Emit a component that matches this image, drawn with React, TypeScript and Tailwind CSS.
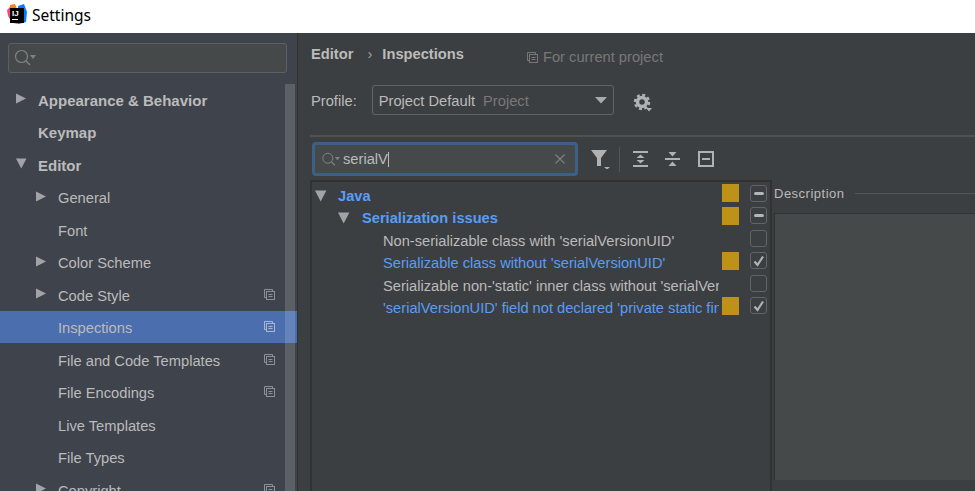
import React from 'react';

const FONT = "font-['Liberation_Sans',Arial,sans-serif]";

type NavItem = {
  label: string;
  indent?: boolean;
  bold?: boolean;
  arrow?: 'right' | 'down';
  copy?: boolean;
  selected?: boolean;
};

const navItems: NavItem[] = [
  { label: 'Appearance & Behavior', bold: true, arrow: 'right' },
  { label: 'Keymap', bold: true },
  { label: 'Editor', bold: true, arrow: 'down' },
  { label: 'General', indent: true, arrow: 'right' },
  { label: 'Font', indent: true },
  { label: 'Color Scheme', indent: true, arrow: 'right' },
  { label: 'Code Style', indent: true, arrow: 'right', copy: true },
  { label: 'Inspections', indent: true, copy: true, selected: true },
  { label: 'File and Code Templates', indent: true, copy: true },
  { label: 'File Encodings', indent: true, copy: true },
  { label: 'Live Templates', indent: true },
  { label: 'File Types', indent: true },
  { label: 'Copyright', indent: true, arrow: 'right', copy: true },
];

type CheckState = 'mixed' | 'on' | 'off';

const treeRows: { label: string; level: number; blue: boolean; mark: boolean; check: CheckState }[] = [
  { label: 'Java', level: 0, blue: true, mark: true, check: 'mixed' },
  { label: 'Serialization issues', level: 1, blue: true, mark: true, check: 'mixed' },
  { label: "Non-serializable class with 'serialVersionUID'", level: 2, blue: false, mark: false, check: 'off' },
  { label: "Serializable class without 'serialVersionUID'", level: 2, blue: true, mark: true, check: 'on' },
  { label: "Serializable non-'static' inner class without 'serialVersionUID'", level: 2, blue: false, mark: false, check: 'off' },
  { label: "'serialVersionUID' field not declared 'private static final long'", level: 2, blue: true, mark: true, check: 'on' },
];

function Logo() {
  return (
    <svg width="20" height="20" viewBox="0 0 20 20" className="mb-[5px] shrink-0">
      <polygon points="0,6 3,3 9,2 5,18 1,12" fill="#f9457f" />
      <polygon points="3,1 8,0 10,5 3,6" fill="#fc801d" />
      <polygon points="11,2 17,0 20,8 19,18 12,20" fill="#087cfa" />
      <polygon points="4,16 14,16 12,20 6,19" fill="#fe2857" />
      <rect x="3" y="4" width="14" height="15" fill="#000000" />
      <text x="5" y="11.5" fontSize="8" fontWeight="700" fill="#ffffff" fontFamily="Liberation Sans, sans-serif">
        IJ
      </text>
      <rect x="5" y="15" width="6" height="1" fill="#ffffff" />
    </svg>
  );
}

function SearchIcon({ size = 18, color = '#7f8386' }: { size?: number; color?: string }) {
  return (
    <svg width={size + 7} height={size} viewBox="0 0 25 18" className="shrink-0">
      <circle cx="7.5" cy="7.5" r="6" fill="none" stroke={color} strokeWidth="1.2" />
      <line x1="12" y1="12" x2="16" y2="16" stroke={color} strokeWidth="1.4" />
      <polygon points="16,6 22,6 19,10" fill={color} />
    </svg>
  );
}

function CopyIcon({ color = '#8b9196' }: { color?: string }) {
  return (
    <svg width="11" height="11" viewBox="0 0 11 11" className="shrink-0">
      <path d="M2.5 8.5 H0.5 V0.5 H8.5 V2.5" fill="none" stroke={color} />
      <rect x="2.5" y="2.5" width="8" height="8" fill="none" stroke={color} />
      <line x1="4.5" y1="5.5" x2="8.5" y2="5.5" stroke={color} />
      <line x1="4.5" y1="7.5" x2="8.5" y2="7.5" stroke={color} />
    </svg>
  );
}

function Arrow({ dir, size = 12 }: { dir: 'right' | 'down'; size?: number }) {
  return (
    <svg width={size} height={size} viewBox="0 0 12 12" className="shrink-0">
      {dir === 'right' ? <polygon points="0,0.5 10,5.5 0,10.5" fill="#a0a4a8" /> : <polygon points="0,0.5 10.5,0.5 5.25,10.5" fill="#a0a4a8" />}
    </svg>
  );
}

function SettingsNav() {
  return (
    <aside className="relative w-[297px] shrink-0 overflow-hidden bg-[#3f434c]">
      <div className="px-2 pt-[10px]">
        <div className="flex h-[30px] w-[279px] items-center rounded-[3px] border border-[#5d6062] bg-[#45494a] pl-[5px]">
          <SearchIcon />
        </div>
      </div>
      <ul className="mt-[10px]">
        {navItems.map((item) => (
          <li
            key={item.label}
            className={`flex h-[32.5px] items-center ${item.selected ? 'bg-[#4b6eaf]' : ''} ${item.indent ? 'pl-[36px]' : 'pl-[16px]'}`}
          >
            <span className="flex w-[22px] shrink-0 items-center">{item.arrow && <Arrow dir={item.arrow} />}</span>
            <span className={`mt-[3px] text-[#bbbbbb] ${item.bold ? 'text-[15px] font-bold' : 'text-[14.7px]'}`}>{item.label}</span>
            {item.copy && (
              <span className="ml-auto mr-[22px]">
                <CopyIcon color={item.selected ? '#a9b6cf' : '#8b9196'} />
              </span>
            )}
          </li>
        ))}
      </ul>
      <div className="absolute bottom-0 left-[285px] top-[51px] w-[10px] bg-white/15" />
    </aside>
  );
}

function Toolbar() {
  const c = '#afb1b3';
  return (
    <div className="ml-[13px] flex items-center">
      <svg width="20" height="20" viewBox="0 0 20 20" className="shrink-0">
        <polygon points="0,1 16,1 10,9 10,17 6,17 6,9" fill={c} />
        <polygon points="13,18 19,18 16,20.5" fill={c} />
      </svg>
      <span className="ml-[8px] h-[25px] w-px bg-[#51545a]" />
      <svg width="18" height="18" viewBox="0 0 18 18" className="ml-[12px] shrink-0">
        <rect x="1" y="1" width="15" height="2" fill={c} />
        <rect x="1" y="15" width="15" height="2" fill={c} />
        <polygon points="8.5,4.5 12.5,8 4.5,8" fill={c} />
        <polygon points="8.5,13.5 12.5,10 4.5,10" fill={c} />
      </svg>
      <svg width="18" height="18" viewBox="0 0 18 18" className="ml-[14px] shrink-0">
        <rect x="1" y="8" width="15" height="2" fill={c} />
        <polygon points="8.5,6.5 12.5,2 4.5,2" fill={c} />
        <polygon points="8.5,11.5 12.5,16 4.5,16" fill={c} />
      </svg>
      <svg width="16" height="16" viewBox="0 0 16 16" className="ml-[16px] shrink-0">
        <rect x="1" y="1" width="14" height="14" fill="none" stroke={c} strokeWidth="2" />
        <rect x="4" y="7" width="8" height="2" fill={c} />
      </svg>
    </div>
  );
}

function CheckBox({ state }: { state: CheckState }) {
  return (
    <span className="flex h-[17px] w-[17px] items-center justify-center rounded-[3px] border-[1.5px] border-[#626465]">
      {state === 'mixed' && <span className="h-[3px] w-[10px] rounded-sm bg-[#b4b6b7]" />}
      {state === 'on' && (
        <svg width="12" height="12" viewBox="0 0 12 12">
          <path d="M1.5 6.5 L4.5 10 L10 1.5" fill="none" stroke="#b0b2b3" strokeWidth="2.2" />
        </svg>
      )}
    </span>
  );
}

function InspectionTree() {
  return (
    <div className="w-[462px] shrink-0 border-x-2 border-t-2 border-[#323232]">
      {treeRows.map((row) => (
        <div key={row.label} className="flex h-[22.5px] items-center">
          <div
            className={`flex min-w-0 flex-1 items-center overflow-hidden ${row.level === 0 ? 'pl-[3px]' : row.level === 1 ? 'pl-[26px]' : 'pl-[71px]'}`}
          >
            {row.level < 2 && (
              <span className={`mt-[6px] shrink-0 ${row.level === 0 ? 'mr-[10px]' : 'mr-[11px]'}`}>
                <Arrow dir="down" size={13} />
              </span>
            )}
            <span
              className={`mt-[7px] whitespace-nowrap text-[14.65px] ${row.blue ? 'text-[#589df6]' : 'text-[#bbbbbb]'} ${row.level < 2 ? 'font-bold' : ''}`}
            >
              {row.label}
            </span>
          </div>
          <span className={`ml-[3px] h-[18px] w-[17px] shrink-0 ${row.mark ? 'bg-[#be9117]' : ''}`} />
          <span className="ml-[11px] mr-[3px] shrink-0">
            <CheckBox state={row.check} />
          </span>
        </div>
      ))}
    </div>
  );
}

function MainPane() {
  return (
    <main className="flex min-w-0 flex-1 flex-col border-l border-[#323232]">
      <div className="flex h-[42px] items-center pl-[13px] pt-[1px] text-[14.7px] text-[#bbbbbb]">
        <span className="font-bold">Editor</span>
        <span className="ml-[14px] text-[#a0a0a0]">›</span>
        <span className="ml-[10px] font-bold">Inspections</span>
        <span className="ml-[63px] mt-[6px] flex items-center gap-[5px] text-[#787878]">
          <CopyIcon color="#787878" />
          For current project
        </span>
      </div>
      <div className="mt-[10px] flex items-center pl-[13px]">
        <span className="mt-[2px] text-[14.7px] text-[#bbbbbb]">Profile:</span>
        <div className="ml-[15px] flex h-[30px] w-[242px] items-center rounded-[3px] border border-[#646464] pl-[6px] pr-[5px] text-[14.7px]">
          <span className="pt-[3px] text-[#bbbbbb]">Project Default</span>
          <span className="ml-[8px] pt-[3px] text-[#787878]">Project</span>
          <svg width="12" height="7" viewBox="0 0 12 7" className="ml-auto mr-[1px]">
            <polygon points="0,0 12,0 6,6.5" fill="#a8abad" />
          </svg>
        </div>
        <svg width="20" height="20" viewBox="0 0 20 20" className="ml-[19px] mt-[6px] shrink-0">
          <circle cx="9" cy="9" r="4.5" fill="none" stroke="#afb1b3" strokeWidth="3.5" />
          <circle cx="9" cy="9" r="7" fill="none" stroke="#afb1b3" strokeWidth="2.5" strokeDasharray="3 2.5" />
          <polygon points="13,15 19,15 16,18.5" fill="#afb1b3" />
        </svg>
      </div>
      <div className="ml-[12px] mt-[20px] h-[2px] bg-[#515151]" />
      <div className="mt-[5px] flex items-center pl-[14px]">
        <div className="flex h-[34px] w-[266px] items-center rounded-[4px] border-[3px] border-[#3d6185] bg-[#45494a] pl-[6px] pr-[10px]">
          <SearchIcon size={15} />
          <span className="text-[14.7px] text-[#bbbbbb]">serialV</span>
          <span className="h-[15px] w-px bg-[#bbbbbb]" />
          <svg width="10" height="10" viewBox="0 0 10 10" className="ml-auto">
            <path d="M0.5 0.5 L9.5 9.5 M9.5 0.5 L0.5 9.5" stroke="#7c7f81" strokeWidth="1.2" />
          </svg>
        </div>
        <Toolbar />
      </div>
      <div className="mt-[4px] flex min-h-0 flex-1 pl-[12px]">
        <InspectionTree />
        <section className="ml-[2px] flex min-w-0 flex-1 flex-col">
          <div className="mb-[6px] flex h-[27px] items-center">
            <span className="text-[13px] tracking-[0.5px] text-[#bbbbbb]">Description</span>
            <span className="ml-[10px] h-px flex-1 bg-[#555555]" />
          </div>
          <div className="h-[267px] border-l border-t border-[#323232] bg-[#45494a]" />
        </section>
      </div>
    </main>
  );
}

export default function App() {
  return (
    <div className={`flex h-[491px] w-[975px] flex-col overflow-hidden bg-[#3c3f41] ${FONT}`}>
      <header className="flex h-[33px] shrink-0 items-center bg-white pl-[7px]">
        <Logo />
        <span className="mb-[2px] ml-[5px] font-['Noto_Sans',sans-serif] text-[15.5px] text-black">Settings</span>
      </header>
      <div className="flex min-h-0 flex-1">
        <SettingsNav />
        <MainPane />
      </div>
    </div>
  );
}
